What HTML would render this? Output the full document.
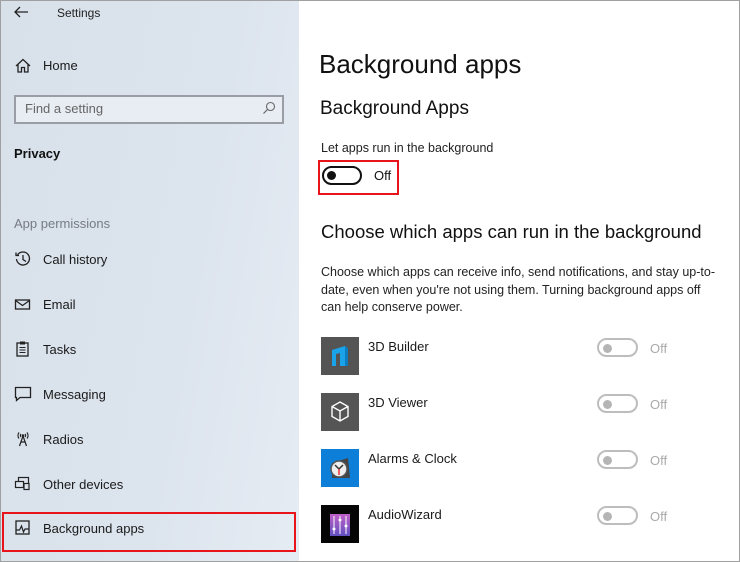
<!DOCTYPE html>
<html><head><meta charset="utf-8"><style>
*{margin:0;padding:0;box-sizing:border-box}
body{width:740px;height:562px;position:relative;overflow:hidden;background:#fff;font-family:"Liberation Sans",sans-serif;color:#111}
.frame{position:absolute;left:0;top:0;width:740px;height:562px;border:1px solid #a0a0a0;pointer-events:none;z-index:9}
.side{position:absolute;left:0;top:0;width:299px;height:562px;background:linear-gradient(100deg,#d8e0ea 0%,#dce4ee 60%,#e6ecf3 100%)}
.t{position:absolute;white-space:nowrap}
.ni{position:absolute;left:14px;width:18px;height:18px}
.nl{position:absolute;left:43px;font-size:13px;color:#1a1a1a}
.app{position:absolute;left:321px;width:38px;height:38px}
.tg{position:absolute;left:597px;width:41px;height:19px;border:2px solid #bdbdbd;border-radius:10px}
.tg::after{content:"";position:absolute;left:4px;top:3.5px;width:9px;height:9px;border-radius:50%;background:#b5b5b5}
.off{position:absolute;left:650px;font-size:13px;color:#aaa}
.an{position:absolute;left:368px;font-size:13px;color:#1a1a1a}
</style></head><body>
<div class="side"></div>
<div class="frame"></div>
<svg class="t" style="left:13px;top:6px" width="16" height="12" viewBox="0 0 16 12"><path d="M15 6H2M7 1L2 6l5 5" fill="none" stroke="#222" stroke-width="1.3"/></svg>
<div class="t" style="left:57px;top:6px;font-size:12px;color:#222">Settings</div>
<svg class="ni" style="top:57px" viewBox="0 0 18 18"><path d="M2 9L9 2.5 16 9M4 7.5V15h3.5v-4.5h3V15H14V7.5" fill="none" stroke="#222" stroke-width="1.3"/></svg>
<div class="nl" style="top:58px">Home</div>
<div class="t" style="left:14px;top:95px;width:270px;height:29px;border:2px solid #9a9ea4;background:#e8edf3"></div>
<div class="t" style="left:25px;top:101px;font-size:13px;color:#666">Find a setting</div>
<svg class="t" style="left:262px;top:101px" width="14" height="14" viewBox="0 0 14 14"><circle cx="8.5" cy="5.5" r="4" fill="none" stroke="#666" stroke-width="1.1"/><path d="M5.5 8.5L1.5 12.5" stroke="#666" stroke-width="1.2"/></svg>
<div class="t" style="left:14px;top:146px;font-size:13px;font-weight:bold;color:#111">Privacy</div>
<div class="t" style="left:14px;top:216px;font-size:13px;color:#767b82">App permissions</div>
<svg class="ni" style="top:250px" viewBox="0 0 18 18"><path d="M3.5 5A6.5 6.5 0 1 1 2.5 9M2 2.5V5.5H5M9 5v4.5l3 2" fill="none" stroke="#222" stroke-width="1.3"/></svg>
<div class="nl" style="top:252px">Call history</div>
<svg class="ni" style="top:296px" viewBox="0 0 18 18"><rect x="1.5" y="4" width="14" height="9" fill="none" stroke="#222" stroke-width="1.3"/><path d="M1.5 4.5l7 5 7-5" fill="none" stroke="#222" stroke-width="1.2"/></svg>
<div class="nl" style="top:297px">Email</div>
<svg class="ni" style="top:340px" viewBox="0 0 18 18"><rect x="3" y="3" width="11" height="13" fill="none" stroke="#222" stroke-width="1.3"/><rect x="6" y="1.5" width="5" height="3" fill="#222"/><path d="M5.5 7.5h6M5.5 10h6M5.5 12.5h6" stroke="#222" stroke-width="1"/></svg>
<div class="nl" style="top:342px">Tasks</div>
<svg class="ni" style="top:385px" viewBox="0 0 18 18"><path d="M1.5 2.5h15v10H6l-3.5 3v-3h-1z" fill="none" stroke="#222" stroke-width="1.3"/></svg>
<div class="nl" style="top:387px">Messaging</div>
<svg class="ni" style="top:430px" viewBox="0 0 18 18"><path d="M9 6L5.5 16M9 6l3.5 10M7 12h4M5 2.5a5 5 0 0 0 0 6M13 2.5a5 5 0 0 1 0 6M7 4a2.5 2.5 0 0 0 0 3M11 4a2.5 2.5 0 0 1 0 3" fill="none" stroke="#222" stroke-width="1.2"/><circle cx="9" cy="5.5" r="1.2" fill="#222"/></svg>
<div class="nl" style="top:432px">Radios</div>
<svg class="ni" style="top:475px" viewBox="0 0 18 18"><rect x="4.5" y="2.5" width="10" height="7" fill="none" stroke="#222" stroke-width="1.2"/><rect x="1.5" y="6.5" width="8" height="6" fill="#dde4ee" stroke="#222" stroke-width="1.2"/><rect x="10" y="8.5" width="5" height="6" fill="#dde4ee" stroke="#222" stroke-width="1.2"/></svg>
<div class="nl" style="top:477px">Other devices</div>
<div class="t" style="left:2px;top:512px;width:294px;height:40px;border:2px solid #e8141b"></div>
<svg class="ni" style="top:519px" viewBox="0 0 18 18"><rect x="2" y="2" width="13" height="13" fill="none" stroke="#222" stroke-width="1.3"/><path d="M2 11h3.5l2-4 2 6 1.5-3H15" fill="none" stroke="#222" stroke-width="1.2"/></svg>
<div class="nl" style="top:521px">Background apps</div>

<div class="t" style="left:319px;top:49px;font-size:26px;color:#111">Background apps</div>
<div class="t" style="left:320px;top:98px;font-size:19px;color:#111">Background Apps</div>
<div class="t" style="left:321px;top:141px;font-size:12.5px;color:#222">Let apps run in the background</div>
<div class="t" style="left:318px;top:160px;width:81px;height:35px;border:2px solid #e8141b"></div>
<div class="t" style="left:322px;top:166px;width:40px;height:19px;border:2px solid #111;border-radius:10px"></div>
<div class="t" style="left:327px;top:171px;width:9px;height:9px;border-radius:50%;background:#111"></div>
<div class="t" style="left:374px;top:168px;font-size:13px;color:#111">Off</div>
<div class="t" style="left:321px;top:221px;font-size:18.5px;color:#111">Choose which apps can run in the background</div>
<div class="t" style="left:321px;top:264px;font-size:12.5px;color:#222;line-height:17.5px;white-space:normal;width:400px">Choose which apps can receive info, send notifications, and stay up-to-date, even when you're not using them. Turning background apps off can help conserve power.</div>

<svg class="app" style="top:337px" viewBox="0 0 38 38"><rect width="38" height="38" fill="#545454"/><path d="M11 13l13-4v20h-5V16l-4 1v12h-4z" fill="#1aa3e8"/><path d="M24 9l3 2v18l-3 0z" fill="#0d7dc2"/></svg>
<div class="an" style="top:339px">3D Builder</div>
<div class="tg" style="top:338px"></div><div class="off" style="top:341px">Off</div>

<svg class="app" style="top:393px" viewBox="0 0 38 38"><rect width="38" height="38" fill="#555"/><path d="M19 9l8 4.5v10L19 28l-8-4.5v-10z M11 13.5l8 4.5 8-4.5M19 18v10" fill="none" stroke="#fff" stroke-width="1.4"/></svg>
<div class="an" style="top:395px">3D Viewer</div>
<div class="tg" style="top:394px"></div><div class="off" style="top:397px">Off</div>

<svg class="app" style="top:449px" viewBox="0 0 38 38"><rect width="38" height="38" fill="#0d7fd8"/><path d="M11 14l16-5 2 20H11z" fill="#444"/><circle cx="18" cy="20" r="8" fill="#eee" stroke="#555" stroke-width="1.5"/><path d="M18 20l-4-4M18 20l4-4" stroke="#333" stroke-width="1.5"/><path d="M18 20v6" stroke="#e33" stroke-width="1.5"/></svg>
<div class="an" style="top:451px">Alarms &amp; Clock</div>
<div class="tg" style="top:450px"></div><div class="off" style="top:453px">Off</div>

<svg class="app" style="top:505px" viewBox="0 0 38 38"><rect width="38" height="38" fill="#050505"/><defs><linearGradient id="g" x1="0" y1="0" x2="0" y2="1"><stop offset="0" stop-color="#c060c8"/><stop offset="1" stop-color="#6050c0"/></linearGradient></defs><rect x="9" y="9" width="20" height="22" fill="url(#g)"/><path d="M13 11v18M19 11v18M25 11v18" stroke="#fff" stroke-width="1"/><circle cx="13" cy="24" r="1.5" fill="#fff"/><circle cx="19" cy="15" r="1.5" fill="#fff"/><circle cx="25" cy="21" r="1.5" fill="#fff"/></svg>
<div class="an" style="top:507px">AudioWizard</div>
<div class="tg" style="top:506px"></div><div class="off" style="top:509px">Off</div>
</body></html>
